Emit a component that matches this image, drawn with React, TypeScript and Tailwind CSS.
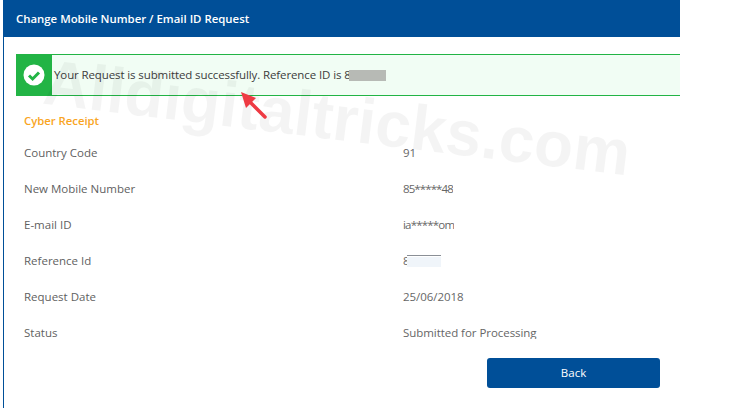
import React from 'react';

const rows: { label: string; value: React.ReactNode }[] = [
    { label: 'Country Code', value: '91' },
    { label: 'New Mobile Number', value: <span className="tracking-[-0.9px]">85*****48</span> },
    { label: 'E-mail ID', value: <span className="tracking-[-0.8px]">ia*****om</span> },
    {
        label: 'Reference Id',
        value: (
            <span className="relative inline-block w-[38px] h-[13px] overflow-hidden align-top">
                8
                <span className="absolute left-[4px] top-[1px] w-[34px] h-px bg-[#8a8f96]" />
                <span className="absolute left-[4px] top-[3px] w-[34px] h-[10px] bg-[#f0f5fa]" />
            </span>
        ),
    },
    { label: 'Request Date', value: '25/06/2018' },
    { label: 'Status', value: 'Submitted for Processing' },
];

const App: React.FC = () => {
    return (
        <div className="relative w-[747px] h-[408px] overflow-hidden bg-white font-['Open_Sans',sans-serif]">
            <div className="ml-[3px] w-[677px] h-full border-l border-[#004f98] flex flex-col">
                <div className="h-[37px] shrink-0 -ml-px pl-[13px] flex items-center bg-[#004f98] text-white text-[11.4px] font-semibold">
                    Change Mobile Number / Email ID Request
                </div>

                <div className="mt-[17px] ml-[12px] h-[42px] shrink-0 flex border-y border-[#22b445] bg-[#f1fdf4]">
                    <div className="w-[36px] -my-px bg-[#22b445] flex items-center justify-center">
                        <svg width="22" height="22" viewBox="0 0 22 22">
                            <circle cx="11" cy="11" r="10.5" fill="#ffffff" />
                            <path d="M6 11.5 L9.6 15 L16 8.5" fill="none" stroke="#22b445" strokeWidth="3" />
                        </svg>
                    </div>
                    <div className="pl-[2px] flex items-center text-[11.5px] tracking-[-0.11px] text-[#3c3c3c] leading-none">
                        Your Request is submitted successfully. Reference ID is 8
                        <span className="ml-[-2px] w-[37px] h-[11px] bg-[#b7bab5]" />
                    </div>
                </div>

                <div className="mt-[17px] ml-[20px] h-[16px] flex items-center text-[11.3px] font-semibold text-[#f9a51f]">
                    Cyber Receipt
                </div>

                <div className="mt-[6px] ml-[20px] h-[216px]">
                    {rows.map((row) => (
                        <div key={row.label} className="h-[36px] flex items-center">
                            <div className="w-[379px] text-[11.5px] font-medium text-[#5f5f5f]">{row.label}</div>
                            <div className="-mt-[2px] h-[13px] leading-[13px] overflow-hidden text-[11.5px] tracking-[-0.05px] text-[#666666]">{row.value}</div>
                        </div>
                    ))}
                </div>

                <div className="flex justify-end pr-[20px] mt-[7px]">
                    <button className="w-[173px] h-[30px] rounded-[3px] bg-[#004f98] text-white text-[11.5px] font-medium">
                        Back
                    </button>
                </div>
            </div>

            {/* watermark + arrow sit on top of the page */}
            <div className="absolute left-[48px] top-[50px] rotate-[7deg] origin-top-left whitespace-nowrap font-['Liberation_Sans',sans-serif] font-bold text-[64px] leading-none text-black/[0.045] pointer-events-none">
                Alldigitaltricks.com
            </div>
            <svg className="absolute left-[236px] top-[88px]" width="34" height="34" viewBox="0 0 34 34">
                <path d="M29 29 L11 11" stroke="#ee3a43" strokeWidth="3.5" strokeLinecap="round" />
                <path d="M5 4 L20 10 L10 20 Z" fill="#ee3a43" />
            </svg>
        </div>
    );
};

export default App;
